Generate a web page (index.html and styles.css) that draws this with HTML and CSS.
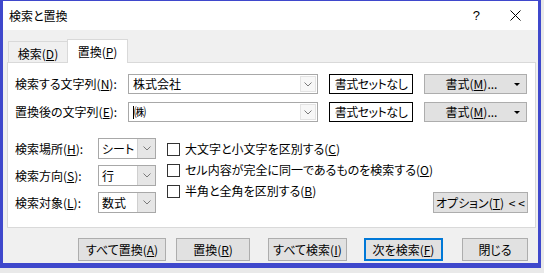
FILE: index.html
```html
<!DOCTYPE html>
<html lang="ja">
<head>
<meta charset="utf-8">
<title>検索と置換</title>
<link rel="stylesheet" href="styles.css">
</head>
<body>
<div class="window">
  <div class="titlebar">
    <span class="title">検索と置換</span>
    <span class="help">?</span>
    <svg class="close" width="11" height="11" viewBox="0 0 11 11"><path d="M0.5 0.5L10.5 10.5M10.5 0.5L0.5 10.5" stroke="#000" stroke-width="1"/></svg>
  </div>
  <div class="tabs">
    <div class="tab">検索(<u>D</u>)</div>
    <div class="tab active">置換(<u>P</u>)</div>
  </div>
  <div class="panel">
    <div class="find-rows">
      <div class="find-row">
        <div class="flabel">検索する文字列(<u>N</u>):</div>
        <div class="combo"><span class="combo-text">株式会社</span><span class="drop"><svg width="8" height="5" viewBox="0 0 8 5"><polyline points="0.5,0.5 4,4 7.5,0.5" fill="none" stroke="#7a7a7a"/></svg></span></div>
        <div class="fmt-none">書式セットなし</div>
        <div class="fmt-btn"><span>書式(<u>M</u>)...</span><span class="tri"></span></div>
      </div>
      <div class="find-row">
        <div class="flabel">置換後の文字列(<u>E</u>):</div>
        <div class="combo"><span class="combo-text"><span class="caret"></span>㈱</span><span class="drop"><svg width="8" height="5" viewBox="0 0 8 5"><polyline points="0.5,0.5 4,4 7.5,0.5" fill="none" stroke="#7a7a7a"/></svg></span></div>
        <div class="fmt-none">書式セットなし</div>
        <div class="fmt-btn"><span>書式(<u>M</u>)...</span><span class="tri"></span></div>
      </div>
    </div>
    <div class="options">
      <div class="sel-grid">
        <div class="label">検索場所(<u>H</u>):</div>
        <div class="select"><span class="sel-text">シート</span><span class="sel-drop"><svg width="8" height="5" viewBox="0 0 8 5"><polyline points="0.5,0.5 4,4 7.5,0.5" fill="none" stroke="#7a7a7a"/></svg></span></div>
        <div class="label">検索方向(<u>S</u>):</div>
        <div class="select"><span class="sel-text">行</span><span class="sel-drop"><svg width="8" height="5" viewBox="0 0 8 5"><polyline points="0.5,0.5 4,4 7.5,0.5" fill="none" stroke="#7a7a7a"/></svg></span></div>
        <div class="label">検索対象(<u>L</u>):</div>
        <div class="select"><span class="sel-text">数式</span><span class="sel-drop"><svg width="8" height="5" viewBox="0 0 8 5"><polyline points="0.5,0.5 4,4 7.5,0.5" fill="none" stroke="#7a7a7a"/></svg></span></div>
      </div>
      <div class="checks">
        <div class="check"><span class="box"></span>大文字と小文字を区別する(<u>C</u>)</div>
        <div class="check"><span class="box"></span>セル内容が完全に同一であるものを検索する(<u>O</u>)</div>
        <div class="check"><span class="box"></span>半角と全角を区別する(<u>B</u>)</div>
      </div>
      <div class="opt-btn">オプション(<u>T</u>)&nbsp;<span class="arrows">&lt;&lt;</span></div>
    </div>
  </div>
  <div class="buttons">
    <div class="btn b-all-rep">すべて置換(<u>A</u>)</div>
    <div class="btn b-rep">置換(<u>R</u>)</div>
    <div class="btn b-all-find">すべて検索(<u>I</u>)</div>
    <div class="btn b-next default">次を検索(<u>F</u>)</div>
    <div class="btn b-close">閉じる</div>
  </div>
</div>
</body>
</html>
```
FILE: styles.css
```css
* { box-sizing: border-box; }
html, body { margin: 0; padding: 0; }
body {
  width: 544px;
  height: 273px;
  background: #e9e9e9;
  font-family: "Noto Sans CJK JP", "Noto Sans", sans-serif;
  font-size: 12px;
  font-feature-settings: "palt";
  color: #000;
  overflow: hidden;
}
u { text-decoration: underline; text-underline-offset: 1px; }
.window {
  width: 541px;
  height: 268px;
  border-style: solid;
  border-color: #3f48cc;
  border-width: 1px 3px 5px 3px;
  background: #f0f0f0;
  display: flex;
  flex-direction: column;
}
.titlebar {
  height: 29px;
  background: #fff;
  display: flex;
  align-items: center;
  padding-left: 6px;
  flex-shrink: 0;
}
.title { line-height: 16px; }
.help { margin-left: auto; font-family: "Liberation Sans", sans-serif; font-size: 13px; line-height: 14px; }
.close { margin-left: 30px; margin-right: 17px; }
.tabs {
  display: flex;
  align-items: flex-end;
  margin-top: 9px;
  padding-left: 5px;
  height: 24px;
  position: relative;
  z-index: 1;
  margin-bottom: -1px;
  flex-shrink: 0;
}
.tab {
  height: 22px;
  width: 59px;
  border: 1px solid #d9d9d9;
  border-bottom: none;
  border-right: none;
  display: flex;
  align-items: center;
  justify-content: center;
  line-height: 16px;
  padding-top: 3px;
}
.tab.active {
  height: 24px;
  width: 61px;
  background: #fff;
  border-right: 1px solid #d9d9d9;
  padding-top: 0;
}
.panel {
  margin: 0 2px 0 4px;
  height: 166px;
  background: #fff;
  border: 1px solid #d9d9d9;
  padding: 11px 7px 0 7px;
  flex-shrink: 0;
}
.find-rows {
  display: flex;
  flex-direction: column;
  gap: 8px;
}
.find-row {
  display: flex;
  height: 20px;
}
.find-row > * { flex-shrink: 0; }
.flabel {
  width: 113px;
  display: flex;
  align-items: center;
  line-height: 16px;
  white-space: nowrap;
}
.label {
  display: flex;
  align-items: center;
  line-height: 16px;
  white-space: nowrap;
}
.combo {
  width: 190px;
  border: 1px solid #a8a8a8;
  display: flex;
  align-items: stretch;
  background: #fff;
}
.combo-text {
  flex: 1;
  display: flex;
  align-items: center;
  padding-left: 4px;
  line-height: 16px;
}
.caret {
  display: inline-block;
  width: 1px;
  height: 13px;
  background: #000;
}
.drop {
  width: 16px;
  margin: 1px;
  border: 1px solid #e3e3e3;
  background: #f7f7f7;
  display: flex;
  align-items: center;
  justify-content: center;
}
.fmt-none {
  width: 84px;
  margin-left: 11px;
  border: 1px solid #000;
  background: #fff;
  display: flex;
  align-items: center;
  justify-content: center;
  line-height: 16px;
  letter-spacing: -0.5px;
  white-space: nowrap;
}
.fmt-btn {
  width: 103px;
  margin-left: 11px;
  border: 1px solid #adadad;
  background: #e1e1e1;
  display: flex;
  align-items: center;
  justify-content: center;
  line-height: 16px;
  position: relative;
  padding-right: 8px;
}
.tri {
  position: absolute;
  right: 6px;
  top: 8px;
  width: 0;
  height: 0;
  border-left: 3px solid transparent;
  border-right: 3px solid transparent;
  border-top: 3px solid #000;
}
.options {
  display: flex;
  margin-top: 16px;
  height: 75px;
}
.sel-grid {
  display: grid;
  grid-template-columns: 83px 58px;
  grid-auto-rows: 21px;
  row-gap: 6px;
}
.select {
  border: 1px solid #a8a8a8;
  display: flex;
  background: #fff;
}
.sel-text {
  flex: 1;
  display: flex;
  align-items: center;
  padding-left: 3px;
  line-height: 16px;
}
.sel-drop {
  width: 18px;
  background: #e6e6e6;
  border-left: 1px solid #cfcfcf;
  display: flex;
  align-items: center;
  justify-content: center;
}
.checks {
  margin-left: 11px;
  padding-top: 3px;
  display: flex;
  flex-direction: column;
  gap: 5px;
}
.check {
  display: flex;
  align-items: center;
  height: 16px;
  line-height: 16px;
  white-space: nowrap;
}
.box {
  width: 13px;
  height: 13px;
  border: 1px solid #333;
  background: #fff;
  margin-right: 5px;
  flex-shrink: 0;
}
.opt-btn {
  margin-left: auto;
  align-self: flex-end;
  width: 103px;
  height: 21px;
  border: 1px solid #adadad;
  background: #e1e1e1;
  display: flex;
  align-items: center;
  justify-content: center;
  line-height: 16px;
  white-space: nowrap;
}
.arrows { letter-spacing: 3px; margin-left: 2px; margin-right: -3px; }
.buttons {
  display: flex;
  margin-top: 10px;
  padding-left: 75px;
}
.btn {
  height: 23px;
  border: 1px solid #adadad;
  background: #e1e1e1;
  display: flex;
  align-items: center;
  justify-content: center;
  line-height: 16px;
  white-space: nowrap;
}
.b-all-rep { width: 88px; }
.b-rep { width: 74px; margin-left: 10px; }
.b-all-find { width: 79px; margin-left: 18px; }
.b-next { width: 79px; margin-left: 17px; }
.b-close { width: 66px; margin-left: 19px; }
.btn.default {
  border: 2px solid #0078d7;
}
```
